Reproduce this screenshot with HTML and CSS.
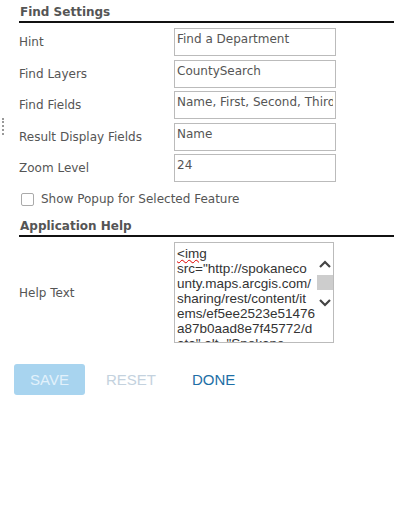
FILE: index.html
```html
<!DOCTYPE html>
<html lang="en">
<head>
    <meta charset="UTF-8">
    <title>Find Settings</title>
    <link rel="stylesheet" href="styles.css">
</head>
<body>
    <div class="grip"></div>
    <div class="panel">
        <h2 class="titulo">Find Settings</h2>
        <div class="fila">
            <label>Hint</label>
            <input type="text" value="Find a Department">
        </div>
        <div class="fila">
            <label>Find Layers</label>
            <input type="text" value="CountySearch">
        </div>
        <div class="fila">
            <label>Find Fields</label>
            <input type="text" value="Name, First, Second, Third">
        </div>
        <div class="fila">
            <label>Result Display Fields</label>
            <input type="text" value="Name">
        </div>
        <div class="fila">
            <label>Zoom Level</label>
            <input type="text" value="24">
        </div>
        <div class="check">
            <span class="caja"></span>
            <span>Show Popup for Selected Feature</span>
        </div>

        <h2 class="titulo titulo-help">Application Help</h2>
        <div class="fila fila-help">
            <label>Help Text</label>
            <div class="area">
                <div class="area-texto"><span class="typo">&lt;img</span>
src="http://spokaneco
unty.maps.arcgis.com/
sharing/rest/content/it
ems/ef5ee2523e51476
a87b0aad8e7f45772/d
ata" alt="Spokane</div>
                <div class="barra">
                    <svg width="12" height="8" viewBox="0 0 12 8"><path d="M1 7 L6 2 L11 7" fill="none" stroke="#444" stroke-width="2.2"/></svg>
                    <div class="pulgar"></div>
                    <svg width="12" height="8" viewBox="0 0 12 8"><path d="M1 1 L6 6 L11 1" fill="none" stroke="#444" stroke-width="2.2"/></svg>
                </div>
            </div>
        </div>
    </div>

    <div class="botones">
        <button class="btn btn-save">SAVE</button>
        <button class="btn btn-reset">RESET</button>
        <button class="btn btn-done">DONE</button>
    </div>
</body>
</html>
```

FILE: styles.css
```css
body {
    margin: 0;
    background-color: white;
    font-family: 'DejaVu Sans', Verdana, sans-serif;
    color: #555;
    position: relative;
}

.grip {
    position: absolute;
    left: 2px;
    top: 118px;
    width: 0;
    height: 17px;
    border-left: 2px dotted #999;
}

.panel {
    padding: 5px 0 0 19px;
}

.titulo {
    font-size: 12px;
    font-weight: bold;
    color: #555;
    margin: 0;
    padding: 0 0 2px 1px;
    border-bottom: 2px solid #111;
    height: 14px;
}

.titulo-help {
    margin-top: 13px;
}

.fila {
    display: flex;
    align-items: center;
    height: 28px;
    margin-top: 3.5px;
    font-size: 12px;
}

.titulo + .fila {
    margin-top: 5px;
}

.fila label {
    width: 155px;
}

.fila input {
    box-sizing: border-box;
    width: 162px;
    height: 28px;
    border: 1px solid #bbb;
    padding: 0 2px 6px;
    font-family: 'DejaVu Sans', Verdana, sans-serif;
    font-size: 12px;
    color: #555;
    margin: 0;
}

.check {
    display: flex;
    align-items: center;
    gap: 7px;
    margin: 10px 0 0 2px;
    font-size: 12px;
    height: 14px;
}

.caja {
    width: 11px;
    height: 11px;
    border: 1px solid #aaa;
    border-radius: 2px;
}

.fila-help {
    height: 101px;
    margin-top: 7px;
}

.area {
    box-sizing: border-box;
    width: 160px;
    height: 101px;
    border: 1px solid #bbb;
    display: flex;
    overflow: hidden;
}

.area-texto {
    width: 141px;
    padding: 3px 0 0 2px;
    font-family: 'Liberation Sans', Arial, sans-serif;
    font-size: 13.5px;
    line-height: 15px;
    color: #333;
    white-space: pre;
    overflow: hidden;
}

.typo {
    text-decoration: underline wavy #d00;
    text-decoration-thickness: 1px;
}

.barra {
    width: 17px;
    display: flex;
    flex-direction: column;
    align-items: center;
    padding-top: 17px;
}

.pulgar {
    width: 16px;
    height: 15px;
    background-color: #cdcdcd;
    margin: 7px 0 9px;
}

.botones {
    display: flex;
    align-items: center;
    gap: 6px;
    margin: 21px 0 0 14px;
}

.btn {
    font-family: 'Liberation Sans', Arial, sans-serif;
    font-size: 15px;
    border: none;
    background: none;
    height: 31px;
    padding: 0 15px;
    border-radius: 3px;
}

.btn-save {
    background-color: #a8d4ef;
    color: #e2f1fb;
    width: 71px;
}

.btn-reset {
    color: #c4d2de;
}

.btn-done {
    color: #1e6fa6;
}
```
